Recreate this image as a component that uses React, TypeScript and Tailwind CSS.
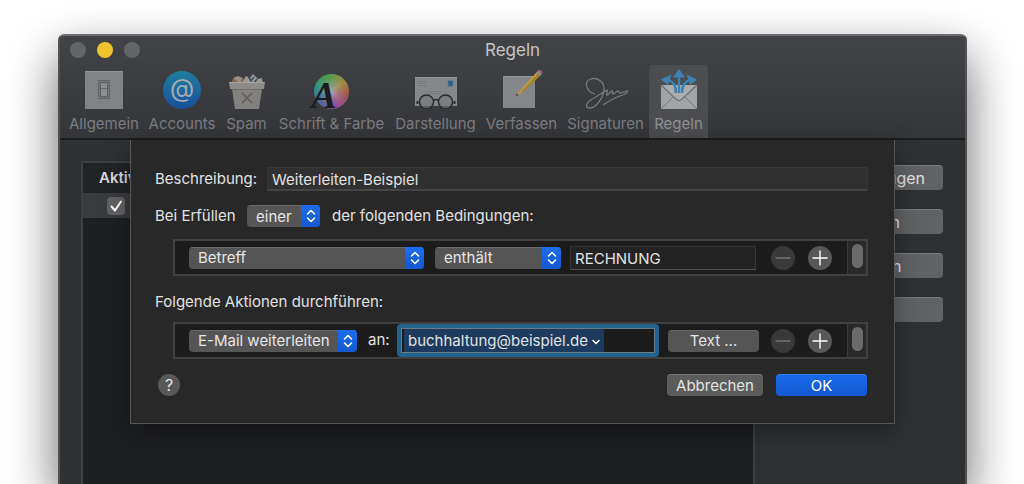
import { useState } from 'react';
import type { ReactNode } from 'react';
import clsx from 'clsx';

type ToolbarItem = {
	label: string;
	icon: ReactNode;
	width: string;
};

const SwitchIcon = () => (
	<svg viewBox="0 0 38 38" className="size-[38px]">
		<rect width="38" height="38" fill="#828387" />
		<path d="M0 .5H38" stroke="#939498" />
		<rect x="13.5" y="9.500" width="11" height="18" fill="#77787b" stroke="#55565a" strokeDasharray="2 1" />
		<rect x="15.500" y="11.500" width="7" height="14" fill="#8b8c8f" stroke="#5c5d61" />
		<path d="M16 17.500H22" stroke="#6b6c6f" />
	</svg>
);

const AtIcon = () => (
	<svg viewBox="0 0 38 38" className="size-[38px]">
		<defs>
			<linearGradient id="at" x1="0" y1="0" x2="0" y2="1">
				<stop offset="0" stopColor="#207e9d" />
				<stop offset="1" stopColor="#184f9b" />
			</linearGradient>
		</defs>
		<circle cx="19" cy="19" r="19" fill="url(#at)" />
		<text x="19" y="26" textAnchor="middle" fontSize="25" fill="#a3abb3" fontFamily="Inter, sans-serif">
			@
		</text>
	</svg>
);

const BinIcon = () => (
	<svg viewBox="0 0 38 38" className="size-[38px]">
		<path d="M3 13 5 8l9-2 5 7z" fill="#8b6c53" />
		<path d="M5 7l5-2 4 2-2 5z" fill="#9a9083" />
		<path d="M15 10l3-5 4 2 3-4 5 5 4-1 1 6H13z" fill="#96999b" />
		<path d="M20 5l3 5 3-4M29 8l-3 4" stroke="#454a50" strokeWidth="1.500" fill="none" />
		<path d="M1 11h36l-1 7H2z" fill="#8c8b89" />
		<path d="M1 11.500H37" stroke="#a2a19e" />
		<path d="M4 18h30l-3 20H7z" fill="#82817f" />
		<path d="M4 18.500h30" stroke="#6e6d6b" />
		<path d="M14 22l10 10M24 22 14 32" stroke="#5f5c58" strokeWidth="1.500" />
	</svg>
);

const FontIcon = () => (
	<div className="relative h-[38px] w-[42px]">
		<div className="absolute top-[3px] right-1 size-[35px] rounded-full bg-[radial-gradient(circle,#a9a2ae_0%,#a9a2ae55_30%,transparent_60%),conic-gradient(#5c9a4b,#a08b3e_50deg,#a55a47_95deg,#9b4c8d_150deg,#73529e_190deg,#3b709e_240deg,#31938b_285deg,#449954_330deg,#5c9a4b)]" />
		<svg viewBox="0 0 42 38" className="absolute top-0 left-0 h-[38px] w-[42px] overflow-visible">
			<text
				x="13"
				y="37"
				textAnchor="middle"
				fontSize="38"
				fontWeight="700"
				fontStyle="italic"
				fill="#1b1c20"
				fontFamily="Liberation Serif, serif"
			>
				A
			</text>
		</svg>
	</div>
);

const LetterIcon = () => (
	<svg viewBox="0 0 44 38" className="h-[38px] w-[44px]">
		<rect x="1" y="6" width="42" height="29" fill="#858689" />
		<path d="M1 6.500H43" stroke="#97989b" />
		<rect x="34" y="9.500" width="5" height="6" fill="#245f8f" stroke="#6d7f90" strokeWidth=".8" />
		<path d="M4 10.500h10M4 12.500h8M4 14.500h9" stroke="#76777a" strokeWidth=".8" />
		<path d="M12 20.500h16M15 22.500h12" stroke="#76777a" strokeWidth=".8" />
		<g fill="none" stroke="#2b2c2f" strokeWidth="1.500">
			<circle cx="12.500" cy="31" r="7" fill="#77787b" fillOpacity=".6" />
			<circle cx="31.500" cy="31" r="7" fill="#77787b" fillOpacity=".6" />
			<path d="M19.500 30c1-2 4-2 5 0" />
			<path d="M3.500 30v3M40.500 30v3" strokeWidth="2" />
		</g>
	</svg>
);

const ComposeIcon = () => (
	<svg viewBox="0 0 42 42" className="size-[42px]">
		<rect x="2" y="9" width="32" height="32" fill="#858689" />
		<path d="M2 9.500h32" stroke="#96979a" />
		<path d="M16 28 35 6l4 3-18 17z" fill="#a5842c" />
		<path d="M18.500 25.500 36 6" stroke="#c19e40" strokeWidth="1.300" />
		<path d="M15 29l2.500-6 3.500 3.500z" fill="#a8906a" />
		<path d="M15 29l1-2.500 1.500 1.500z" fill="#333" />
		<path d="M35 6l2-2.500 4 3.500-2 2z" fill="#8f8f91" />
		<path d="M37 3.500c2-2 6 1 4 3.500z" fill="#9e6066" />
	</svg>
);

const SignatureIcon = () => (
	<svg viewBox="0 0 44 38" className="h-[38px] w-[44px]" fill="none" stroke="#77787c" strokeWidth="1.300">
		<path d="M11 23C1 20 0 10 7 8c7-2 13 3 13 10 0 8-8 19-14 19-6 0-4-6 4-10l13-8c2 0-2 5 0 5s3-4 5-4-1 3 1 3 3-3 5-3 0 2 2 2l7-2c2 0 0 3-7 5-7 2-12 6-17 9" />
	</svg>
);

const RulesIcon = () => (
	<svg viewBox="0 0 38 40" className="h-[40px] w-[38px]">
		<rect x="1" y="16" width="36" height="24" fill="#a2a3a5" />
		<path d="M1 40l14-14M37 40 23 26" stroke="#747577" />
		<path d="M1 16l15 14c2 2 4 2 6 0l15-14" fill="#acadae" stroke="#747577" strokeWidth="1.500" />
		<g fill="none" stroke="#3c82b5" strokeWidth="2.500">
			<path d="M19 24V7" />
			<path d="M16 24c0-8-3-11-8-13.500" />
			<path d="M22 24c0-8 3-11 8-13.500" />
		</g>
		<path d="M19 0l6 8.500H13zM1 10.500l10.500-5L8 16zM37 10.500l-10.500-5L30 16z" fill="#3c82b5" />
	</svg>
);

const toolbar: ToolbarItem[] = [
	{ label: 'Allgemein', icon: <SwitchIcon />, width: 'w-20' },
	{ label: 'Accounts', icon: <AtIcon />, width: 'w-[76px]' },
	{ label: 'Spam', icon: <BinIcon />, width: 'w-[53px]' },
	{ label: 'Schrift & Farbe', icon: <FontIcon />, width: 'w-[117px]' },
	{ label: 'Darstellung', icon: <LetterIcon />, width: 'w-[91px]' },
	{ label: 'Verfassen', icon: <ComposeIcon />, width: 'w-[81px]' },
	{ label: 'Signaturen', icon: <SignatureIcon />, width: 'w-[87px]' },
	{ label: 'Regeln', icon: <RulesIcon />, width: 'w-[59px]' }
];

const sideButtons = ['Regel hinzufügen', 'Bearbeiten', 'Duplizieren', 'Entfernen'];

const PopUp = ({ label, options, className }: { label: string; options: string[]; className: string }) => (
	<div className={clsx('grid h-[22px] shrink-0 overflow-hidden rounded bg-[#555555]', className)}>
		<select
			aria-label={label}
			className="[grid-area:1/1] h-[22px] w-full appearance-none border-t border-[#6a6a6a] bg-transparent pl-[9px] pr-5 text-[15px] leading-5 text-[#e6e6e6] outline-none"
		>
			{options.map((option) => (
				<option key={option}>{option}</option>
			))}
		</select>
		<span className="pointer-events-none [grid-area:1/1] flex w-[19px] items-center justify-center justify-self-end bg-linear-to-b from-[#1d6cf0] to-[#1259d0]">
			<svg viewBox="0 0 10 14" className="h-[14px] w-[10px]" fill="none" stroke="#fff" strokeWidth="1.600" strokeLinecap="round" strokeLinejoin="round">
				<path d="M1.500 5 5 1.500 8.500 5M1.500 9 5 12.500 8.500 9" />
			</svg>
		</span>
	</div>
);

const RoundButton = ({ label, plus }: { label: string; plus?: boolean }) => (
	<button
		type="button"
		aria-label={label}
		disabled={!plus}
		className={clsx(
			'flex size-6 shrink-0 items-center justify-center rounded-full',
			plus ? 'bg-[#585858] text-white' : 'bg-[#393939] text-[#777777]'
		)}
	>
		<svg viewBox="0 0 16 16" className="size-4" stroke="currentColor" strokeWidth="1.400">
			<path d={plus ? 'M.5 8h15M8 .5v15' : 'M.5 8h15'} />
		</svg>
	</button>
);

const RuleBox = ({ children }: { children: ReactNode }) => (
	<div className="ml-[18px] flex h-[37px] items-stretch border-2 border-[#404040] bg-[#1c1c1c]">
		<div className="flex min-w-0 flex-1 items-center pl-[14px] pr-[15px]">
			{children}
			<div className="flex gap-[13px]">
				<RoundButton label="Entfernen" />
				<RoundButton label="Hinzufügen" plus />
			</div>
		</div>
		<div className="flex w-[19px] justify-center border-l border-[#3c3c3c] bg-[#292929] pt-[3px]">
			<div className="h-6 w-[11px] rounded-full bg-[#6b6b6b]" />
		</div>
	</div>
);

const RuleSheet = () => {
	const [description, setDescription] = useState('Weiterleiten-Beispiel');
	const [value, setValue] = useState('RECHNUNG');

	return (
		<form
			onSubmit={(e) => e.preventDefault()}
			className="absolute top-0 right-[70px] left-[70px] border border-t-0 border-[#555555] bg-[#282828] pt-[27px] pr-[26px] pb-[27px] pl-6 text-[15px] whitespace-nowrap text-[#e2e2e2] shadow-[0_8px_24px_rgba(0,0,0,0.35)]"
		>
			<div className="flex h-6 items-center">
				<label htmlFor="description" className="w-[112px] shrink-0">
					Beschreibung:
				</label>
				<input
					id="description"
					value={description}
					onChange={(e) => setDescription(e.target.value)}
					className="h-6 min-w-0 flex-1 border border-b-2 border-[#363636] border-b-[#454545] bg-[#303030] px-1 pt-px outline-none"
				/>
			</div>
			<div className="mt-[14px] flex h-[22px] items-center">
				<span className="w-[92px] shrink-0">Bei Erfüllen</span>
				<PopUp label="Bedingung" options={['einer', 'aller']} className="w-[73px]" />
				<span className="ml-3">der folgenden Bedingungen:</span>
			</div>
			<div className="mt-3">
				<RuleBox>
					<PopUp label="Feld" options={['Betreff', 'Von', 'An']} className="w-[235px]" />
					<PopUp label="Vergleich" options={['enthält', 'enthält nicht']} className="ml-[11px] w-[126px]" />
					<input
						aria-label="Wert"
						value={value}
						onChange={(e) => setValue(e.target.value)}
						className="mr-[15px] ml-[9px] h-6 min-w-0 flex-1 border border-[#353535] border-b-[#505050] bg-[#232323] px-1 pt-px outline-none"
					/>
				</RuleBox>
			</div>
			<p className="mt-[15px] h-[22px] leading-[22px]">Folgende Aktionen durchführen:</p>
			<div className="mt-[9px]">
				<RuleBox>
					<PopUp label="Aktion" options={['E-Mail weiterleiten', 'E-Mail bewegen']} className="w-[168px]" />
					<label htmlFor="recipient" className="w-[40px] shrink-0 pl-[11px]">
						an:
					</label>
					<div className="flex h-[33px] min-w-0 flex-1 items-stretch rounded border-4 border-[#22638f] bg-[#1c1c1c]">
						<div className="flex min-w-0 flex-1 border border-[#6a7b87] pl-[2px]">
							<button type="button" className="flex shrink-0 items-center gap-1 rounded-xs bg-[#1d3b5e] px-1 pt-[2px]">
								buchhaltung@beispiel.de
								<svg viewBox="0 0 8 6" className="h-[6px] w-2" fill="none" stroke="#fff" strokeWidth="1.500" strokeLinecap="round">
									<path d="M1 1.500 4 4.500 7 1.500" />
								</svg>
							</button>
							<input id="recipient" className="w-0 min-w-0 flex-1 bg-transparent outline-none" />
						</div>
					</div>
					<button type="button" className="mr-3 ml-[9px] h-[22px] w-[91px] shrink-0 rounded border-t border-[#6a6a6a] bg-[#555555] leading-5">
						Text ...
					</button>
				</RuleBox>
			</div>
			<div className="mt-[15px] flex h-[22px] items-center pr-px">
				<button type="button" aria-label="Hilfe" className="ml-[3px] size-[22px] rounded-full bg-[#585858] text-base leading-[22px]">
					?
				</button>
				<button type="button" className="ml-auto h-[22px] w-24 rounded border-t border-[#777777] bg-[#5c5c5c] leading-5">
					Abbrechen
				</button>
				<button type="submit" className="ml-[13px] h-[22px] w-[91px] rounded border-t border-[#3a7ff0] bg-linear-to-b from-[#1a68ea] to-[#1259d0] leading-5 text-white">
					OK
				</button>
			</div>
		</form>
	);
};

const App = () => {
	const [active, setActive] = useState(true);

	return (
		<div className="flex min-h-screen overflow-hidden bg-white pt-[34px] pr-[57px] pl-[58px] font-['Inter','Liberation_Sans',sans-serif]">
			<main className="flex min-w-0 flex-1 flex-col rounded-t-md border-2 border-b-0 border-[#4f5254] border-t-[#6c6e70] bg-[#2e3032] shadow-[0_22px_50px_rgba(0,0,0,0.6)]">
				<header className="rounded-t-sm border-b-2 border-[#1b1c1d] bg-linear-to-b from-[#424347] to-[#353639]">
					<div className="grid h-7 grid-cols-[1fr_auto_1fr] items-center px-[10px]">
						<div className="flex gap-[11px]">
							<span className="size-4 rounded-full bg-[#646568]" />
							<span className="size-4 rounded-full bg-[#f0c42c]" />
							<span className="size-4 rounded-full bg-[#646568]" />
						</div>
						<h1 className="text-[17px] leading-6 text-[#c4c5c7]">Regeln</h1>
					</div>
					<nav className="flex pt-px pl-1">
						{toolbar.map(({ label, icon, width }) => (
							<button
								key={label}
								type="button"
								className={clsx(
									'flex h-[73px] flex-col items-center justify-end rounded-t pb-[5px] text-[15px] leading-[18px] whitespace-nowrap',
									width,
									label === 'Regeln' ? 'bg-[#4c4d50] text-[#909194]' : 'text-[#7b7c80]'
								)}
							>
								{icon}
								<span className="mt-[6px]">{label}</span>
							</button>
						))}
					</nav>
				</header>
				<div className="relative flex flex-1 pt-[21px]">
					<table className="ml-[21px] block flex-1 border-2 border-b-0 border-[#3e3f41] bg-[#1e1f22] text-left text-[#d8d8da]">
						<thead className="block bg-[#222327]">
							<tr className="flex h-[30px] items-center">
								<th className="pl-4 text-[15px] font-semibold">Aktiv</th>
							</tr>
						</thead>
						<tbody className="block">
							<tr className="flex h-[25px] items-center bg-[#3a3b3d]">
								<td className="pl-6">
									<label className="grid size-[18px]">
										<input
											type="checkbox"
											aria-label="Regel aktiv"
											checked={active}
											onChange={(e) => setActive(e.target.checked)}
											className="[grid-area:1/1] size-[18px] appearance-none rounded-sm bg-[#606163]"
										/>
										{active && (
											<svg viewBox="0 0 18 18" className="pointer-events-none [grid-area:1/1] size-[18px]" fill="none" stroke="#fff" strokeWidth="2" strokeLinecap="round" strokeLinejoin="round">
												<path d="M4.500 9.500 8 13.500 14 4.500" />
											</svg>
										)}
									</label>
								</td>
							</tr>
						</tbody>
					</table>
					<aside className="flex w-[210px] shrink-0 flex-col gap-[19px] pt-1 pr-[22px] pl-5">
						{sideButtons.map((label) => (
							<button key={label} type="button" className="h-[25px] rounded border-t border-[#78797b] bg-[#616264] text-base leading-6 text-[#e0e0e2]">
								{label}
							</button>
						))}
					</aside>
					<RuleSheet />
				</div>
			</main>
		</div>
	);
};

export default App;
